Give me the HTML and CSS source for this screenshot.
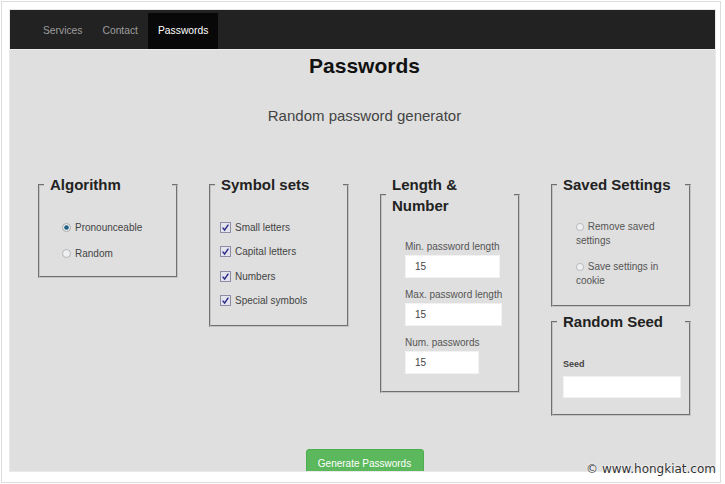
FILE: index.html
```html
<!DOCTYPE html>
<html>
<head>
<meta charset="utf-8">
<link rel="stylesheet" href="styles.css">
</head>
<body>
<div class="shot">
  <div class="page">
    <nav class="nav">
      <a class="nav-item">Services</a>
      <a class="nav-item">Contact</a>
      <a class="nav-item active">Passwords</a>
    </nav>
    <main class="main">
      <h1 class="title">Passwords</h1>
      <p class="subtitle">Random password generator</p>
      <div class="grid">
        <fieldset class="box box-algo">
          <legend class="legend">Algorithm</legend>
          <div class="radio-list">
            <label class="radio-row">
              <svg class="radio" width="9" height="9" viewBox="0 0 9 9"><circle cx="4.5" cy="4.5" r="4" fill="#eef0f2" stroke="#a9a9a9"/><circle cx="4.5" cy="4.5" r="2.3" fill="#1d5f82"/></svg>
              <span>Pronounceable</span>
            </label>
            <label class="radio-row">
              <svg class="radio" width="9" height="9" viewBox="0 0 9 9"><circle cx="4.5" cy="4.5" r="4" fill="#eef0f2" stroke="#b5b5b5"/></svg>
              <span>Random</span>
            </label>
          </div>
        </fieldset>

        <fieldset class="box box-sym">
          <legend class="legend">Symbol sets</legend>
          <div class="check-list">
            <label class="check-row"><svg class="check" width="11" height="11" viewBox="0 0 11 11"><rect x=".5" y=".5" width="10" height="10" fill="#e4e4ef" stroke="#8c8ca6"/><path d="M2.6 5.6 L4.6 8 L8.4 2.6" fill="none" stroke="#2b2b86" stroke-width="1.4"/></svg><span>Small letters</span></label>
            <label class="check-row"><svg class="check" width="11" height="11" viewBox="0 0 11 11"><rect x=".5" y=".5" width="10" height="10" fill="#e4e4ef" stroke="#8c8ca6"/><path d="M2.6 5.6 L4.6 8 L8.4 2.6" fill="none" stroke="#2b2b86" stroke-width="1.4"/></svg><span>Capital letters</span></label>
            <label class="check-row"><svg class="check" width="11" height="11" viewBox="0 0 11 11"><rect x=".5" y=".5" width="10" height="10" fill="#e4e4ef" stroke="#8c8ca6"/><path d="M2.6 5.6 L4.6 8 L8.4 2.6" fill="none" stroke="#2b2b86" stroke-width="1.4"/></svg><span>Numbers</span></label>
            <label class="check-row"><svg class="check" width="11" height="11" viewBox="0 0 11 11"><rect x=".5" y=".5" width="10" height="10" fill="#e4e4ef" stroke="#8c8ca6"/><path d="M2.6 5.6 L4.6 8 L8.4 2.6" fill="none" stroke="#2b2b86" stroke-width="1.4"/></svg><span>Special symbols</span></label>
          </div>
        </fieldset>

        <fieldset class="box box-len">
          <legend class="legend">Length &amp; Number</legend>
          <div class="field-list">
            <label class="field">Min. password length<input class="text-input" type="text" value="15"></label>
            <label class="field">Max. password length<input class="text-input" type="text" value="15"></label>
            <label class="field">Num. passwords<input class="text-input" type="text" value="15"></label>
          </div>
        </fieldset>

        <div class="stack">
          <fieldset class="box box-saved">
            <legend class="legend">Saved Settings</legend>
            <div class="saved-list">
              <label class="saved-row"><svg class="radio" width="8" height="8" viewBox="0 0 9 9"><circle cx="4.5" cy="4.5" r="4" fill="#eef0f2" stroke="#b5b5b5"/></svg> Remove saved settings</label>
              <label class="saved-row"><svg class="radio" width="8" height="8" viewBox="0 0 9 9"><circle cx="4.5" cy="4.5" r="4" fill="#eef0f2" stroke="#b5b5b5"/></svg> Save settings in cookie</label>
            </div>
          </fieldset>
          <fieldset class="box box-seed">
            <legend class="legend">Random Seed</legend>
            <div class="seed-body">
              <label class="seed-label">Seed</label>
              <input class="seed-input" type="text">
            </div>
          </fieldset>
        </div>
      </div>
      <div class="actions">
        <button class="btn-generate">Generate Passwords</button>
      </div>
    </main>
  </div>
  <div class="watermark">© www.hongkiat.com</div>
</div>
</body>
</html>
```

FILE: styles.css
```css
* { box-sizing: border-box; }
html, body { margin: 0; padding: 0; background: #fff; }
body { font-family: "Liberation Sans", Arial, sans-serif; }

.shot {
  position: relative;
  margin: 1px;
  width: 720px;
  height: 482px;
  border: 1px solid #dcdcdc;
  padding: 7px 3px 9px 7px;
  background: #fff;
}

.page {
  width: 707px;
  height: 463px;
  background: #dfdfdf;
  border: 1px solid #e9e9e9;
  overflow: hidden;
}

.nav {
  display: flex;
  height: 40px;
  padding: 3px 0 0 23px;
  background: #222;
  border-bottom: 1px solid #ececec;
}
.nav-item {
  display: block;
  padding: 0 10px;
  height: 36px;
  line-height: 35px;
  font-size: 10.3px;
  color: #9d9d9d;
}
.nav-item.active {
  background: #080808;
  color: #fff;
}

.main {
  padding-left: 4px;
}

.title {
  margin: 4px 0 0;
  text-align: center;
  font-size: 21px;
  line-height: 24px;
  font-weight: bold;
  color: #111;
}
.subtitle {
  margin: 28px 0 0;
  text-align: center;
  font-size: 15px;
  line-height: 20px;
  color: #444;
}

.grid {
  margin-top: 48px;
  display: grid;
  grid-template-columns: repeat(4, 140px);
  column-gap: 31px;
  justify-content: center;
  align-items: start;
}

.box {
  margin: 0;
  padding: 0 4px;
  min-width: 0;
  width: 140px;
  border: 2px groove #c4c4c4;
}
.legend {
  width: 100%;
  padding: 0 6px;
  font-size: 15px;
  line-height: 21px;
  font-weight: bold;
  color: #222;
}

.radio-list {
  padding: 19px 0 10px 18px;
}
.radio-row {
  display: flex;
  align-items: center;
  height: 26px;
  font-size: 10px;
  color: #444;
}
.radio-row .radio {
  margin-right: 4px;
  flex: none;
}

.check-list {
  padding: 20px 0 12px 5px;
}
.check-row {
  display: flex;
  align-items: center;
  height: 24.5px;
  font-size: 10px;
  color: #444;
}
.check-row .check {
  margin-right: 4px;
  flex: none;
}

.field-list {
  padding: 23px 0 17px 19px;
  display: flex;
  flex-direction: column;
  align-items: flex-start;
  gap: 9px;
}
.field {
  display: inline-block;
  font-size: 10px;
  line-height: 16px;
  color: #555;
}
.text-input {
  display: block;
  width: 0;
  min-width: 100%;
  height: 23px;
  border: 1px solid #f2f2f2;
  background: #fff;
  padding: 0 0 0 9px;
  font-family: "Liberation Sans", Arial, sans-serif;
  font-size: 10px;
  color: #444;
  outline: none;
}

.stack {
  display: flex;
  flex-direction: column;
  gap: 4px;
}
.saved-list {
  padding: 25px 0 17px 19px;
  display: flex;
  flex-direction: column;
  gap: 12px;
}
.saved-row {
  display: block;
  width: 100px;
  font-size: 10px;
  line-height: 14px;
  color: #555;
}
.saved-row .radio {
  vertical-align: -1px;
  margin-right: 1px;
}

.seed-body {
  padding: 25px 1px 16px 6px;
}
.seed-label {
  display: block;
  font-size: 9px;
  line-height: 14px;
  font-weight: bold;
  color: #444;
}
.seed-input {
  display: block;
  margin-top: 5px;
  width: 118px;
  height: 22px;
  border: 1px solid #f2f2f2;
  background: #fff;
  outline: none;
}

.actions {
  display: flex;
  justify-content: center;
  margin-top: 33px;
}
.btn-generate {
  width: 118px;
  height: 28px;
  border: 1px solid #4cae4c;
  border-radius: 3px;
  background: #5cb85c;
  color: #fff;
  font-family: "Liberation Sans", Arial, sans-serif;
  font-size: 10px;
  padding: 0;
}

.watermark {
  position: absolute;
  right: 2px;
  bottom: 6px;
  font-family: "DejaVu Sans", sans-serif;
  font-size: 12px;
  line-height: 14px;
  color: #333;
  padding: 0 2px;
  text-shadow: 0 0 2px #fff, 0 0 2px #fff;
}
```
